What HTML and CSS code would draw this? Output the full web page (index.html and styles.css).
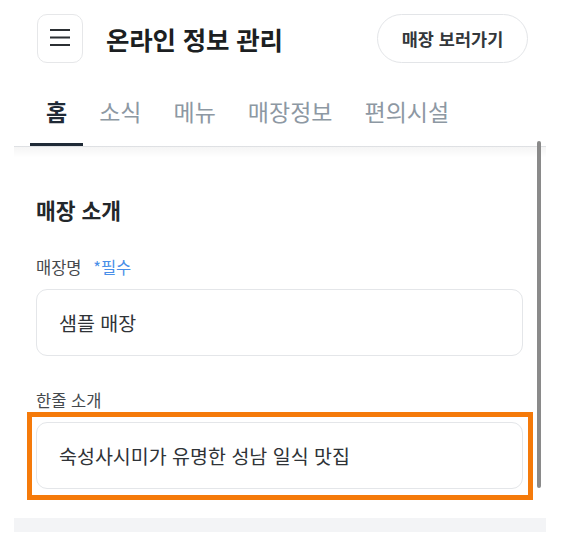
FILE: index.html
```html
<!DOCTYPE html>
<html lang="ko">
<head>
<meta charset="utf-8">
<link rel="stylesheet" href="styles.css">
</head>
<body>
<div class="page">
  <header class="topbar">
    <button class="menu-btn" aria-label="메뉴">
      <svg width="22" height="18" viewBox="0 0 22 18"><path d="M1 2h20M1 9.5h20M1 17h20" stroke="#2b2f33" stroke-width="2" fill="none"/></svg>
    </button>
    <h1 class="title">온라인 정보 관리</h1>
    <button class="view-btn">매장 보러가기</button>
  </header>
  <nav class="tabs">
    <a class="tab active">홈</a>
    <a class="tab">소식</a>
    <a class="tab">메뉴</a>
    <a class="tab">매장정보</a>
    <a class="tab">편의시설</a>
  </nav>
  <main class="content">
    <h2 class="section-title">매장 소개</h2>
    <div class="field">
      <label class="label">매장명 <span class="req">*필수</span></label>
      <div class="input">샘플 매장</div>
    </div>
    <div class="field highlight-wrap">
      <label class="label">한줄 소개</label>
      <div class="input">숙성사시미가 유명한 성남 일식 맛집</div>
      <div class="highlight"></div>
    </div>
  </main>
  <div class="next-section"></div>
  <div class="scrollbar"></div>
</div>
</body>
</html>
```
FILE: styles.css
```css
* { box-sizing: border-box; }
html, body { margin: 0; padding: 0; background: #fff; }
body {
  font-family: "Noto Sans CJK KR", "Noto Sans", sans-serif;
  color: #222;
  width: 562px;
  height: 538px;
  overflow: hidden;
}
.page { position: relative; height: 538px; }
.topbar {
  display: flex;
  align-items: center;
  height: 50px;
  margin-top: 13px;
  padding: 0 34px 0 37px;
}
.menu-btn {
  width: 46px;
  height: 49px;
  border: 1px solid #e6e7e9;
  border-radius: 10px;
  background: #fff;
  display: flex;
  align-items: center;
  justify-content: center;
  padding: 0;
  padding-bottom: 2px;
}
.title {
  margin: 0 0 0 23px;
  font-size: 25.5px;
  font-weight: 700;
  color: #1c1f22;
  flex: 1;
  letter-spacing: -0.2px;
}
.view-btn {
  width: 151px;
  height: 49px;
  border: 1px solid #e3e5e8;
  border-radius: 25px;
  background: #fff;
  font-family: inherit;
  font-size: 17.5px;
  font-weight: 700;
  color: #33373b;
  padding: 0;
}
.tabs {
  position: relative;
  display: flex;
  margin: 0 16px 0 14px;
  padding-left: 16px;
  border-bottom: 1px solid #e8eaed;
}
.tabs::after {
  content: "";
  position: absolute;
  left: 0;
  right: 0;
  top: 100%;
  height: 12px;
  background: linear-gradient(rgba(0,0,0,0.045), rgba(0,0,0,0));
}
.tab {
  padding: 33px 16px 17px;
  line-height: 30px;
  font-size: 23px;
  color: #8d98a3;
  border-bottom: 3px solid transparent;
}
.tab.active {
  color: #1f2a36;
  font-weight: 700;
  border-bottom-color: #1f2a36;
}
.content {
  padding: 0 39px 0 36px;
}
.section-title {
  margin: 49px 0 0;
  font-size: 21.5px;
  line-height: 28px;
  font-weight: 700;
  color: #23272b;
}
.field { margin-top: 32px; }
.field + .field { margin-top: 33px; }
.label {
  display: block;
  font-size: 16.5px;
  line-height: 22px;
  color: #45494d;
}
.req { color: #4a8fe8; margin-left: 7px; }
.input {
  margin-top: 11px;
  height: 67px;
  border: 1px solid #e4e6e9;
  border-radius: 11px;
  padding: 0 22px;
  display: flex;
  align-items: center;
  font-size: 19.5px;
  color: #2f3337;
}
.highlight-wrap { position: relative; }
.highlight {
  position: absolute;
  left: -9px;
  right: -10px;
  top: 23px;
  bottom: -11px;
  border: 5px solid #f57a0a;
}
.next-section {
  margin: 29px 16px 0 14px;
  height: 14px;
  background: #f3f4f6;
}
.scrollbar {
  position: absolute;
  left: 537px;
  top: 128px;
  width: 4px;
  height: 347px;
  background: #8a8a8a;
  border-radius: 2px;
}
```
